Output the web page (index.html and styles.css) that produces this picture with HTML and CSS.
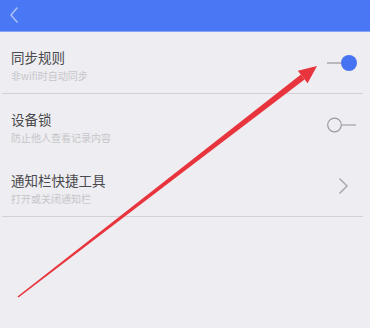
FILE: index.html
```html
<!DOCTYPE html>
<html lang="zh">
<head>
<meta charset="utf-8">
<title>设置</title>
<link rel="stylesheet" href="styles.css">
</head>
<body>
<div class="screen">
  <header class="topbar">
    <svg class="back" width="12" height="18" viewBox="0 0 12 18"><polyline points="8,1 2,8 8,15" fill="none" stroke="#a9c0fb" stroke-width="1.6" stroke-linecap="round" stroke-linejoin="round"/></svg>
  </header>
  <ul class="settings">
    <li class="item item--divided">
      <div class="text">
        <div class="title">同步规则</div>
        <div class="sub">非wifi时自动同步</div>
      </div>
      <svg class="ctrl" width="31" height="18" viewBox="0 0 31 18"><line x1="0" y1="9" x2="14" y2="9" stroke="#a8a8ac" stroke-width="1.5"/><circle cx="22" cy="9" r="8" fill="#4673f2"/></svg>
    </li>
    <li class="item">
      <div class="text">
        <div class="title">设备锁</div>
        <div class="sub">防止他人查看记录内容</div>
      </div>
      <svg class="ctrl" width="31" height="18" viewBox="0 0 31 18"><circle cx="7.5" cy="9" r="6.8" fill="none" stroke="#9a9a9e" stroke-width="1.2"/><line x1="14.3" y1="9" x2="29" y2="9" stroke="#a8a8ac" stroke-width="1.3"/></svg>
    </li>
    <li class="item item--divided">
      <div class="text">
        <div class="title">通知栏快捷工具</div>
        <div class="sub">打开或关闭通知栏</div>
      </div>
      <svg class="ctrl" width="31" height="18" viewBox="0 0 31 18"><polyline points="12.5,1.5 20,9 12.5,16.5" fill="none" stroke="#a4a4a8" stroke-width="1.4" stroke-linejoin="miter"/></svg>
    </li>
  </ul>
  <svg class="annotation" width="370" height="328" viewBox="0 0 370 328">
    <polygon points="18.5,297.6 17.5,296.4 300.9,74.6 304.5,79.4" fill="#e8343c"/>
    <polygon points="317,66 297.8,70.7 307.6,83.3" fill="#e8343c"/>
  </svg>
</div>
</body>
</html>
```

FILE: styles.css
```css
html, body {
  margin: 0;
  padding: 0;
}
body {
  background: #eeedf1;
  font-family: "Noto Sans CJK SC", "Noto Sans", sans-serif;
}
.screen {
  position: relative;
  width: 370px;
  height: 328px;
  overflow: hidden;
  background: #eeedf1;
}
.topbar {
  height: 31px;
  background: #4a77f4;
  border-bottom: 1px solid #86a4f7;
  display: flex;
  align-items: center;
  padding-left: 9px;
}
.back {
  display: block;
}
.settings {
  list-style: none;
  margin: 0;
  padding: 0;
}
.item {
  display: flex;
  align-items: center;
  justify-content: space-between;
  margin: 0 7px 0 2px;
  padding: 0 5px 0 9px;
  height: 61px;
}
.item--divided {
  border-bottom: 1px solid #d2d1d6;
}
.text {
  display: flex;
  flex-direction: column;
  align-self: flex-start;
  padding-top: 17px;
}
.title {
  font-size: 13.5px;
  line-height: 16px;
  color: #4a4a4d;
}
.sub {
  margin-top: 5px;
  font-size: 10px;
  line-height: 12px;
  color: #c6c6ca;
}
.ctrl {
  display: block;
  flex: none;
}
.annotation {
  position: absolute;
  left: 0;
  top: 0;
  pointer-events: none;
}
```
